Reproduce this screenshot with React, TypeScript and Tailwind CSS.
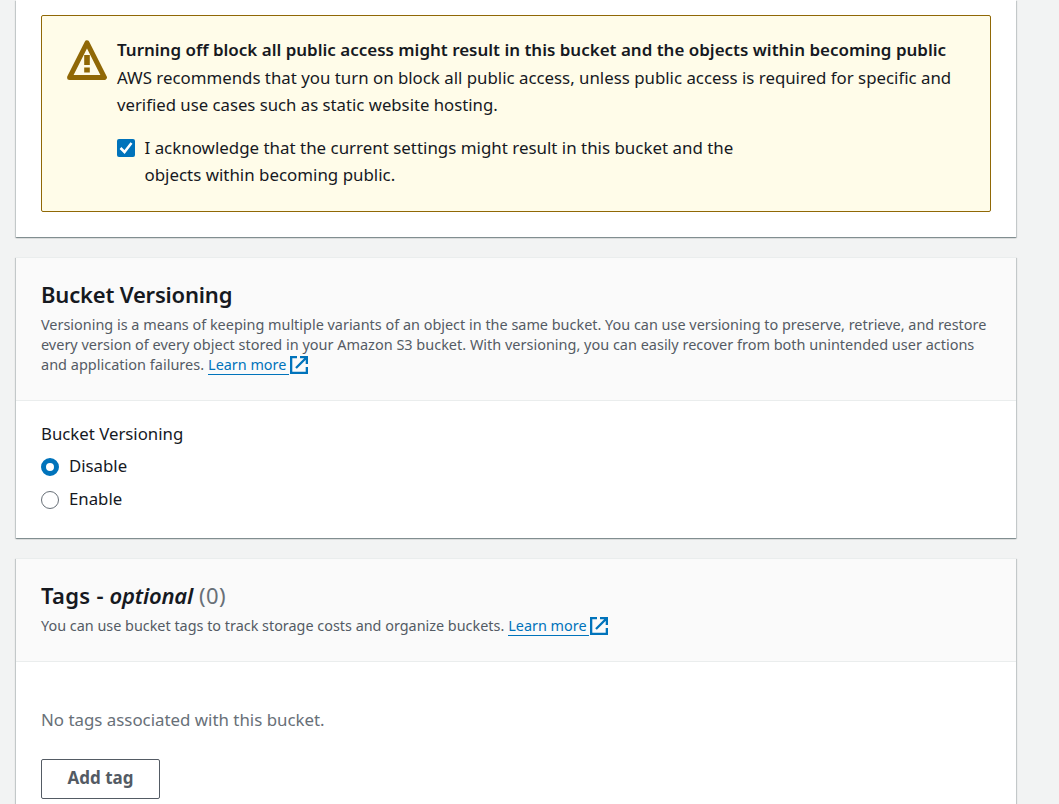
import type { ReactNode } from "react";

const cardShadow =
  "shadow-[0_1px_0_0_#87959680,0_1px_1px_0_rgba(0,28,36,0.3),1px_1px_1px_0_rgba(0,28,36,0.15),-1px_1px_1px_0_rgba(0,28,36,0.15)]";

function WarningIcon() {
  return (
    <svg className="h-10 w-10 shrink-0" viewBox="0 0 40 40" fill="none">
      <path d="M20 2.8 37.4 37.4H2.6Z" stroke="#906806" strokeWidth="5" strokeLinejoin="round" />
      <path d="M20 15v10M20 27.5v5" stroke="#906806" strokeWidth="5.6" />
    </svg>
  );
}

function ExternalIcon() {
  return (
    <svg className="h-[18px] w-[18px] shrink-0" viewBox="0 0 18 18" fill="none" stroke="#0073bb" strokeWidth="2.3">
      <path d="M7 1.15H1.15v15.7h15.7V11" />
      <path d="M10 1.15h6.85V8M16.5 1.5 6 12" />
    </svg>
  );
}

function LearnMore() {
  return (
    <a href="#" className="mt-px ml-1 flex h-5 items-center text-[14.4px] text-[#0073bb]">
      <span className="h-5 w-[81px] border-b border-[#0073bb] leading-5">Learn more</span>
      <span className="ml-[1px]">
        <ExternalIcon />
      </span>
    </a>
  );
}

function Header({ children }: { children: ReactNode }) {
  return <header className="border-y border-[#eaeded] bg-[#fafafa] px-[25px] pt-[21px]">{children}</header>;
}

function Radio({ label, checked }: { label: string; checked?: boolean }) {
  return (
    <label className="flex h-[33px] items-center gap-[10px]">
      <span
        className={
          checked
            ? "h-[18px] w-[18px] rounded-full border-[5.5px] border-[#0073bb] bg-white"
            : "h-[18px] w-[18px] rounded-full border border-[#687078] bg-white"
        }
      />
      <span className="relative -top-px text-[16.8px]">{label}</span>
    </label>
  );
}

export default function App() {
  return (
    <main className="h-[804px] overflow-hidden bg-[#f2f3f3] pl-4 font-['Noto_Sans',sans-serif] text-[#16191f]">
      <div className="flex w-[1000px] flex-col">
        <section className={"h-[237px] bg-white px-[25px] pt-[15px] " + cardShadow}>
          <div className="flex h-[197px] gap-[10px] rounded-[2px] border border-[#906806] bg-[#fffce9] pl-[25px] pt-[20px] whitespace-nowrap">
            <div className="pt-[4px]">
              <WarningIcon />
            </div>
            <div className="text-[17px] leading-[27px]">
              <p className="text-[16.98px] font-semibold">
                Turning off block all public access might result in this bucket and the objects within becoming public
              </p>
              <p className="mt-[1px] text-[16.83px]">
                AWS recommends that you turn on block all public access, unless public access is required for specific and
              </p>
              <p className="text-[16.74px]">verified use cases such as static website hosting.</p>
              <label className="mt-4 flex gap-[9.5px]">
                <span className="mt-[5px] flex h-[18px] w-[18px] items-center justify-center rounded-[2px] bg-[#0073bb]">
                  <svg className="h-[18px] w-[18px]" viewBox="0 0 18 18" fill="none">
                    <path d="m3.5 9 4 4 7-9" stroke="#fff" strokeWidth="2.5" />
                  </svg>
                </span>
                <span>
                  <span className="block text-[16.92px]">
                    I acknowledge that the current settings might result in this bucket and the
                  </span>
                  <span className="block text-[16.9px]">objects within becoming public.</span>
                </span>
              </label>
            </div>
          </div>
        </section>

        <section className={"mt-5 h-[281px] bg-white " + cardShadow}>
          <div className="h-[144px]">
            <Header>
              <h2 className="h-[35px] text-[22px] leading-[30px] font-semibold tracking-[-0.2px]">Bucket Versioning</h2>
              <div className="h-[86px] leading-5 whitespace-nowrap text-[#545b64]">
                <p className="relative top-px text-[14.43px]">
                  Versioning is a means of keeping multiple variants of an object in the same bucket. You can use versioning
                  to preserve, retrieve, and restore
                </p>
                <p className="relative top-px text-[14.47px]">
                  every version of every object stored in your Amazon S3 bucket. With versioning, you can easily recover from
                  both unintended user actions
                </p>
                <p className="flex text-[14.5px]">
                  and application failures.
                  <LearnMore />
                </p>
              </div>
            </Header>
          </div>
          <div className="px-[25px] pt-[19px]">
            <p className="h-[30px] text-[16.8px] leading-[27px]">Bucket Versioning</p>
            <Radio label="Disable" checked />
            <Radio label="Enable" />
          </div>
        </section>

        <section className={"mt-5 h-[300px] bg-white " + cardShadow}>
          <div className="h-[104px]">
            <Header>
              <h2 className="flex h-[35px] text-[22px] leading-[30px] font-semibold">
                <span className="w-[68.5px] tracking-[0.3px]">Tags -</span>
                <i className="w-[89.5px] tracking-[-0.2px]">optional</i>
                <span className="font-normal tracking-[0.4px] text-[#687078]">(0)</span>
              </h2>
              <p className="flex h-[46px] text-[14.4px] leading-5 whitespace-nowrap text-[#545b64]">
                <span className="relative top-px">
                  You can use bucket tags to track storage costs and organize buckets.
                </span>
                <LearnMore />
              </p>
            </Header>
          </div>
          <div className="px-[25px] pt-[44px]">
            <p className="text-[16.88px] leading-[27px] text-[#687078]">No tags associated with this bucket.</p>
            <button className="mt-[26px] flex h-10 w-[119px] items-center justify-center rounded-[2px] border border-[#545b64] text-[17px] font-bold text-[#545b64]">
              <span className="relative -top-px">Add tag</span>
            </button>
          </div>
        </section>
      </div>
    </main>
  );
}
